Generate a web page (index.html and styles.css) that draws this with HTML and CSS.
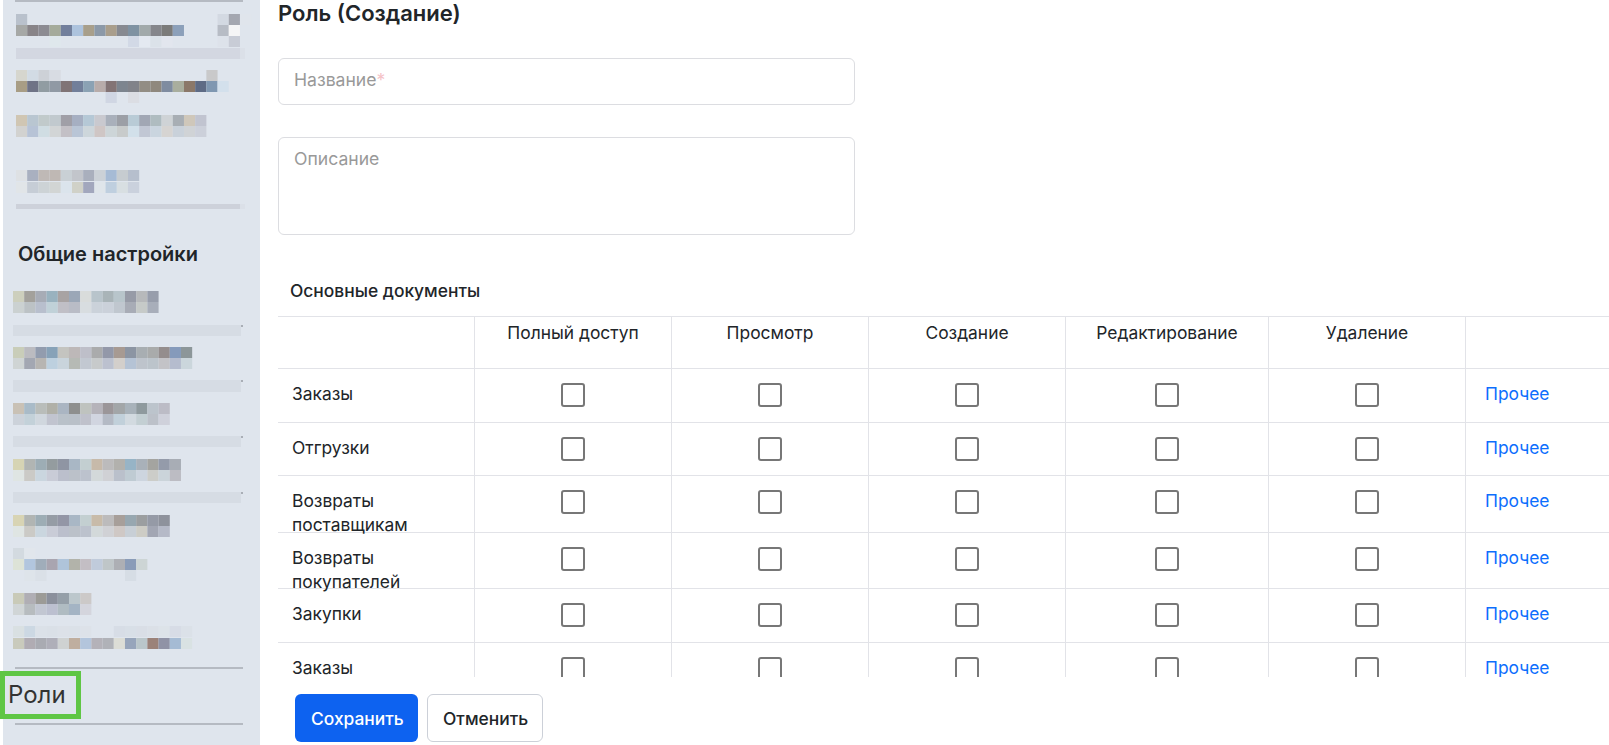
FILE: index.html
```html
<!DOCTYPE html>
<html lang="ru">
<head>
    <meta charset="UTF-8">
    <title>Роль (Создание)</title>
    <link rel="stylesheet" href="styles.css">
</head>
<body>

    <aside class="sidebar">
        <div class="rule"></div>

        <!-- blurred menu items -->
        <svg class="mosaic inset-wide gap-12" width="231" height="33">
            <g>
                <rect x="0" y="0" fill="#b9c1cc"/><rect x="198" y="0" fill="#d3d9e2"/><rect x="209" y="0" fill="#a4a7b0"/><rect x="220" y="0" fill="#e0e5ec"/>
                <rect x="0" y="11" fill="#a6a8a6"/><rect x="11" y="11" fill="#888488"/><rect x="22" y="11" fill="#8c8b92"/><rect x="33" y="11" fill="#a5ab9b"/><rect x="44" y="11" fill="#727f9c"/><rect x="55" y="11" fill="#adc3dd"/><rect x="66" y="11" fill="#a89f8b"/><rect x="77" y="11" fill="#8c99a8"/><rect x="88" y="11" fill="#a99e8c"/><rect x="99" y="11" fill="#878a91"/><rect x="110" y="11" fill="#7f92a2"/><rect x="121" y="11" fill="#a2aaab"/><rect x="132" y="11" fill="#85868b"/><rect x="143" y="11" fill="#7b7b7a"/><rect x="154" y="11" fill="#8ca0ba"/><rect x="198" y="11" fill="#b7bcc5"/><rect x="209" y="11" fill="#f5f5f6"/>
                <rect x="33" y="22" fill="#dfe8ec"/><rect x="110" y="22" fill="#d2d9e6"/><rect x="121" y="22" fill="#e4e9f1"/><rect x="132" y="22" fill="#dbe2e9"/><rect x="143" y="22" fill="#e2e6ee"/><rect x="198" y="22" fill="#dde2ea"/><rect x="209" y="22" fill="#c8ccd6"/>
            </g>
        </svg>
        <div class="strip strip-wide strip-tall gap-1"></div>

        <svg class="mosaic inset-wide gap-11" width="231" height="33">
            <g>
                <rect x="0" y="0" fill="#d6d6ce"/><rect x="11" y="0" fill="#d2dbe4"/><rect x="22" y="0" fill="#cdd1d7"/><rect x="33" y="0" fill="#d8dce3"/><rect x="187" y="0" fill="#c9c9ca"/>
                <rect x="0" y="11" fill="#a89d85"/><rect x="11" y="11" fill="#6f7386"/><rect x="22" y="11" fill="#919ca2"/><rect x="33" y="11" fill="#9099a4"/><rect x="44" y="11" fill="#807476"/><rect x="55" y="11" fill="#727f9a"/><rect x="66" y="11" fill="#8ba2b4"/><rect x="77" y="11" fill="#b8acaa"/><rect x="88" y="11" fill="#837475"/><rect x="99" y="11" fill="#7d858f"/><rect x="110" y="11" fill="#81838a"/><rect x="121" y="11" fill="#928d84"/><rect x="132" y="11" fill="#8f887e"/><rect x="143" y="11" fill="#7f8ca0"/><rect x="154" y="11" fill="#a9ae9e"/><rect x="165" y="11" fill="#8b7869"/><rect x="176" y="11" fill="#5e6b85"/><rect x="187" y="11" fill="#7f97b1"/><rect x="198" y="11" fill="#d3e0ec"/>
                <rect x="88" y="22" fill="#d0d6e3"/><rect x="110" y="22" fill="#dbdde3"/>
            </g>
        </svg>

        <svg class="mosaic inset-wide gap-12" width="187" height="22">
            <g>
                <rect x="0" y="0" fill="#d0c6b3"/><rect x="11" y="0" fill="#b9c6d1"/><rect x="22" y="0" fill="#c1cacb"/><rect x="33" y="0" fill="#c1c9ce"/><rect x="44" y="0" fill="#a09fa7"/><rect x="55" y="0" fill="#a6afc2"/><rect x="66" y="0" fill="#b5c8d6"/><rect x="77" y="0" fill="#c9c9cf"/><rect x="88" y="0" fill="#a9b0bb"/><rect x="99" y="0" fill="#9c9fa6"/><rect x="110" y="0" fill="#b9cbd6"/><rect x="121" y="0" fill="#a1a7b4"/><rect x="132" y="0" fill="#afbcc0"/><rect x="143" y="0" fill="#cfd3d6"/><rect x="154" y="0" fill="#a8aeb4"/><rect x="165" y="0" fill="#cfc7ba"/><rect x="176" y="0" fill="#c1c4d0"/>
                <rect x="0" y="11" fill="#d2d2d0"/><rect x="11" y="11" fill="#b7c3d6"/><rect x="22" y="11" fill="#d0dde3"/><rect x="33" y="11" fill="#d2d5d6"/><rect x="44" y="11" fill="#c3c0c6"/><rect x="55" y="11" fill="#b9c5d6"/><rect x="66" y="11" fill="#cdd6db"/><rect x="77" y="11" fill="#cfc6c5"/><rect x="88" y="11" fill="#cdd5d8"/><rect x="99" y="11" fill="#c8cbcb"/><rect x="110" y="11" fill="#d2e0ea"/><rect x="121" y="11" fill="#c1c7d4"/><rect x="132" y="11" fill="#cad5df"/><rect x="143" y="11" fill="#d6d4d2"/><rect x="154" y="11" fill="#c9d1da"/><rect x="165" y="11" fill="#d0d3d6"/><rect x="176" y="11" fill="#ccd0da"/>
            </g>
        </svg>

        <svg class="mosaic inset-wide gap-33" width="121" height="23">
            <g>
                <rect x="0" y="0" fill="#dee1e4"/><rect x="11" y="0" fill="#a9b0c0"/><rect x="22" y="0" fill="#bfb9b6"/><rect x="33" y="0" fill="#bfb8b4"/><rect x="44" y="0" fill="#c9d0d5"/><rect x="55" y="0" fill="#c2c5cb"/><rect x="66" y="0" fill="#a9afbd"/><rect x="77" y="0" fill="#cbd1d7"/><rect x="88" y="0" fill="#a6bbd5"/><rect x="99" y="0" fill="#c6ccd0"/><rect x="110" y="0" fill="#b6bfcd"/>
                <rect x="0" y="12" fill="#e1e5e8"/><rect x="11" y="12" fill="#c6cdd6"/><rect x="22" y="12" fill="#cdd3d6"/><rect x="33" y="12" fill="#d2d5d4"/><rect x="44" y="12" fill="#dbe4ec"/><rect x="55" y="12" fill="#d0d1c8"/><rect x="66" y="12" fill="#a2a7bd"/><rect x="77" y="12" fill="#dfe5ea"/><rect x="88" y="12" fill="#bfcfdf"/><rect x="99" y="12" fill="#d8dfe2"/><rect x="110" y="12" fill="#cad1dd"/>
            </g>
        </svg>
        <div class="strip strip-wide strip-thin gap-11"></div>

        <h2 class="sidebar-title">Общие настройки</h2>

        <svg class="mosaic inset-list gap-25" width="143" height="22">
            <g>
                <rect x="0" y="0" fill="#cdcfbd"/><rect x="11" y="0" fill="#a3a19c"/><rect x="22" y="0" fill="#a7acb6"/><rect x="33" y="0" fill="#99b2bf"/><rect x="44" y="0" fill="#a8a3a3"/><rect x="55" y="0" fill="#9ba7b7"/><rect x="66" y="0" fill="#d9dcdb"/><rect x="77" y="0" fill="#b8c4cb"/><rect x="88" y="0" fill="#a9b4b8"/><rect x="99" y="0" fill="#b8c5cb"/><rect x="110" y="0" fill="#979ba7"/><rect x="121" y="0" fill="#b7b9bb"/><rect x="132" y="0" fill="#979dab"/>
                <rect x="0" y="11" fill="#cbd1d1"/><rect x="11" y="11" fill="#bcc2c5"/><rect x="22" y="11" fill="#b8bfcd"/><rect x="33" y="11" fill="#c0d1d8"/><rect x="44" y="11" fill="#c0bfc6"/><rect x="55" y="11" fill="#b9bcc6"/><rect x="66" y="11" fill="#d8dde0"/><rect x="77" y="11" fill="#cbd2da"/><rect x="88" y="11" fill="#cbd1da"/><rect x="99" y="11" fill="#c0c7cf"/><rect x="110" y="11" fill="#a8acb6"/><rect x="121" y="11" fill="#c6cac8"/><rect x="132" y="11" fill="#a8aeba"/>
            </g>
        </svg>
        <div class="strip strip-list strip-tall gap-12"></div>

        <svg class="mosaic inset-list gap-11" width="176" height="22">
            <g>
                <rect x="0" y="0" fill="#c9cdb9"/><rect x="11" y="0" fill="#bbbbc0"/><rect x="22" y="0" fill="#929cae"/><rect x="33" y="0" fill="#87a2b8"/><rect x="44" y="0" fill="#c4c4c0"/><rect x="55" y="0" fill="#bdb8b8"/><rect x="66" y="0" fill="#bebfc9"/><rect x="77" y="0" fill="#aaabac"/><rect x="88" y="0" fill="#9398a9"/><rect x="99" y="0" fill="#a79a92"/><rect x="110" y="0" fill="#8c95a3"/><rect x="121" y="0" fill="#a8aeb2"/><rect x="132" y="0" fill="#a9abab"/><rect x="143" y="0" fill="#948d8d"/><rect x="154" y="0" fill="#859abb"/><rect x="165" y="0" fill="#8c9699"/>
                <rect x="0" y="11" fill="#cfd4d4"/><rect x="11" y="11" fill="#a3a7b2"/><rect x="22" y="11" fill="#b7b5b2"/><rect x="33" y="11" fill="#bdd0df"/><rect x="44" y="11" fill="#c9d4dc"/><rect x="55" y="11" fill="#b6bab5"/><rect x="66" y="11" fill="#c2c8d1"/><rect x="77" y="11" fill="#c7cacb"/><rect x="88" y="11" fill="#bcc1cf"/><rect x="99" y="11" fill="#d3cfcb"/><rect x="110" y="11" fill="#b5c3d5"/><rect x="121" y="11" fill="#bec4cc"/><rect x="132" y="11" fill="#bcc4cb"/><rect x="143" y="11" fill="#c3c3c7"/><rect x="154" y="11" fill="#b5bcce"/><rect x="165" y="11" fill="#cbd6dc"/>
            </g>
        </svg>
        <div class="strip strip-list strip-taller gap-11"></div>

        <svg class="mosaic inset-list gap-11" width="154" height="22">
            <g>
                <rect x="0" y="0" fill="#c9c1b5"/><rect x="11" y="0" fill="#a9bbc8"/><rect x="22" y="0" fill="#b9bdba"/><rect x="33" y="0" fill="#b0b0a8"/><rect x="44" y="0" fill="#aab5c2"/><rect x="55" y="0" fill="#8e8f8e"/><rect x="66" y="0" fill="#bfc3bf"/><rect x="77" y="0" fill="#b5b3ba"/><rect x="88" y="0" fill="#9b9699"/><rect x="99" y="0" fill="#a2a6a8"/><rect x="110" y="0" fill="#a8b2ba"/><rect x="121" y="0" fill="#8f9a9e"/><rect x="132" y="0" fill="#bcc4cc"/><rect x="143" y="0" fill="#bcbcc6"/>
                <rect x="0" y="11" fill="#ccd2da"/><rect x="11" y="11" fill="#c3d1d9"/><rect x="22" y="11" fill="#d0d7de"/><rect x="33" y="11" fill="#c1c4cf"/><rect x="44" y="11" fill="#b9c1c9"/><rect x="55" y="11" fill="#b9c0c8"/><rect x="66" y="11" fill="#bfc1cb"/><rect x="77" y="11" fill="#d1d5e0"/><rect x="88" y="11" fill="#b4bac5"/><rect x="99" y="11" fill="#c1d0da"/><rect x="110" y="11" fill="#d2dae0"/><rect x="121" y="11" fill="#c3cfd3"/><rect x="132" y="11" fill="#bcc1c9"/><rect x="143" y="11" fill="#cfd1db"/>
            </g>
        </svg>
        <div class="strip strip-list strip-tall gap-11"></div>

        <svg class="mosaic inset-list gap-12" width="165" height="22">
            <g>
                <rect x="0" y="0" fill="#d6d4b4"/><rect x="11" y="0" fill="#b1b5b3"/><rect x="22" y="0" fill="#9dadb5"/><rect x="33" y="0" fill="#949c9f"/><rect x="44" y="0" fill="#8f95a3"/><rect x="55" y="0" fill="#a9b7c5"/><rect x="66" y="0" fill="#c3cfd1"/><rect x="77" y="0" fill="#c7baaa"/><rect x="88" y="0" fill="#bcbbbc"/><rect x="99" y="0" fill="#b2b1ad"/><rect x="110" y="0" fill="#97b4c6"/><rect x="121" y="0" fill="#a9b1b9"/><rect x="132" y="0" fill="#a4a4a0"/><rect x="143" y="0" fill="#949baa"/><rect x="154" y="0" fill="#a8adb5"/>
                <rect x="0" y="11" fill="#dfe5e3"/><rect x="11" y="11" fill="#cbcac6"/><rect x="22" y="11" fill="#cad6df"/><rect x="33" y="11" fill="#c9ccd7"/><rect x="44" y="11" fill="#bbbfcc"/><rect x="55" y="11" fill="#bbc1c9"/><rect x="66" y="11" fill="#bcc2cd"/><rect x="77" y="11" fill="#d3d9da"/><rect x="88" y="11" fill="#d0d1d5"/><rect x="99" y="11" fill="#bac0cb"/><rect x="110" y="11" fill="#bfcbd3"/><rect x="121" y="11" fill="#cdd5df"/><rect x="132" y="11" fill="#cccdc9"/><rect x="143" y="11" fill="#cbd4da"/><rect x="154" y="11" fill="#bcbcc3"/>
            </g>
        </svg>
        <div class="strip strip-list strip-tall gap-11"></div>

        <svg class="mosaic inset-list gap-12" width="154" height="22">
            <g>
                <rect x="0" y="0" fill="#d8d4b4"/><rect x="11" y="0" fill="#b1b5b3"/><rect x="22" y="0" fill="#9dadb5"/><rect x="33" y="0" fill="#959ca5"/><rect x="44" y="0" fill="#9396a6"/><rect x="55" y="0" fill="#a9b7c5"/><rect x="66" y="0" fill="#c3cfd1"/><rect x="77" y="0" fill="#c8bba9"/><rect x="88" y="0" fill="#bcbbbc"/><rect x="99" y="0" fill="#a79f9a"/><rect x="110" y="0" fill="#97a7b0"/><rect x="121" y="0" fill="#9b9ea0"/><rect x="132" y="0" fill="#959aa6"/><rect x="143" y="0" fill="#8e929c"/>
                <rect x="0" y="11" fill="#dfe5e3"/><rect x="11" y="11" fill="#cbcac6"/><rect x="22" y="11" fill="#cad6df"/><rect x="33" y="11" fill="#c9ccd7"/><rect x="44" y="11" fill="#bbbfcc"/><rect x="55" y="11" fill="#bbc1c9"/><rect x="66" y="11" fill="#bcc2cd"/><rect x="77" y="11" fill="#d3d9da"/><rect x="88" y="11" fill="#d0d1d5"/><rect x="99" y="11" fill="#cfc8c5"/><rect x="110" y="11" fill="#c8cfd6"/><rect x="121" y="11" fill="#cdccc5"/><rect x="132" y="11" fill="#a2a6b3"/><rect x="143" y="11" fill="#b5b9c7"/>
            </g>
        </svg>

        <svg class="mosaic inset-list gap-11" width="132" height="33">
            <g>
                <rect x="0" y="0" fill="#d3dae0"/><rect x="11" y="0" fill="#e1e6ec"/>
                <rect x="0" y="11" fill="#dde3d7"/><rect x="11" y="11" fill="#b2c6de"/><rect x="22" y="11" fill="#a0adba"/><rect x="33" y="11" fill="#a9a5b0"/><rect x="44" y="11" fill="#afc4da"/><rect x="55" y="11" fill="#b2b3aa"/><rect x="66" y="11" fill="#c3bec4"/><rect x="77" y="11" fill="#c0cbdb"/><rect x="88" y="11" fill="#bfc6c8"/><rect x="99" y="11" fill="#adafb4"/><rect x="110" y="11" fill="#8a9cb8"/><rect x="121" y="11" fill="#cdd5d5"/>
                <rect x="11" y="22" fill="#dee4ea"/><rect x="22" y="22" fill="#dae0e7"/><rect x="110" y="22" fill="#d6dde5"/>
            </g>
        </svg>

        <svg class="mosaic inset-list gap-12" width="77" height="22">
            <g>
                <rect x="0" y="0" fill="#c9cab8"/><rect x="11" y="0" fill="#b0aeb4"/><rect x="22" y="0" fill="#9c9b97"/><rect x="33" y="0" fill="#8b909c"/><rect x="44" y="0" fill="#959fa8"/><rect x="55" y="0" fill="#bcc7cc"/><rect x="66" y="0" fill="#ccc9c8"/>
                <rect x="0" y="11" fill="#d0d5d6"/><rect x="11" y="11" fill="#b7bcbf"/><rect x="22" y="11" fill="#c2c7d2"/><rect x="33" y="11" fill="#bcc0d0"/><rect x="44" y="11" fill="#b0bcc2"/><rect x="55" y="11" fill="#a4b4c4"/><rect x="66" y="11" fill="#d4d5dd"/>
            </g>
        </svg>

        <svg class="mosaic inset-list gap-11" width="176" height="23">
            <g>
                <rect x="0" y="0" fill="#d9e0e2"/><rect x="11" y="0" fill="#ccd8e3"/><rect x="22" y="0" fill="#dbe1e8"/><rect x="33" y="0" fill="#dae0e7"/><rect x="44" y="0" fill="#dce1e8"/><rect x="55" y="0" fill="#dbe1e8"/><rect x="66" y="0" fill="#dde2e9"/><rect x="99" y="0" fill="#d7dde6"/><rect x="110" y="0" fill="#d8dfe7"/><rect x="121" y="0" fill="#d9dee6"/><rect x="132" y="0" fill="#dbe0e7"/><rect x="143" y="0" fill="#dde3e9"/><rect x="154" y="0" fill="#d7dce6"/><rect x="165" y="0" fill="#dbe1e8"/>
                <rect x="0" y="12" fill="#c9cabc"/><rect x="11" y="12" fill="#b0acb3"/><rect x="22" y="12" fill="#a9abb2"/><rect x="33" y="12" fill="#afafb9"/><rect x="44" y="12" fill="#cfd2d2"/><rect x="55" y="12" fill="#bfae9f"/><rect x="66" y="12" fill="#b3c5dc"/><rect x="77" y="12" fill="#b4b2b9"/><rect x="88" y="12" fill="#b0b2b8"/><rect x="99" y="12" fill="#dcddd6"/><rect x="110" y="12" fill="#97a5bb"/><rect x="121" y="12" fill="#bac6ca"/><rect x="132" y="12" fill="#9b8279"/><rect x="143" y="12" fill="#9093a6"/><rect x="154" y="12" fill="#a5bbd4"/><rect x="165" y="12" fill="#d9e2e3"/>
            </g>
        </svg>

        <div class="rule gap-18"></div>
        <div class="role-item">Роли</div>
        <div class="rule gap-4"></div>
    </aside>

    <main class="content">
        <h1 class="page-title">Роль (Создание)</h1>

        <div class="field field-name">
            <input type="text" class="field-input" id="role-name">
            <label class="field-label" for="role-name">Название<span class="required">*</span></label>
        </div>

        <div class="field field-description">
            <textarea class="field-input" id="role-description"></textarea>
            <label class="field-label" for="role-description">Описание</label>
        </div>

        <h3 class="section-title">Основные документы</h3>

        <div class="rights-table">
            <div class="rights-row row-head">
                <div class="cell"></div>
                <div class="cell cell-center">Полный доступ</div>
                <div class="cell cell-center">Просмотр</div>
                <div class="cell cell-center">Создание</div>
                <div class="cell cell-center">Редактирование</div>
                <div class="cell cell-center">Удаление</div>
                <div class="cell"></div>
            </div>

            <div class="rights-row row-54">
                <div class="cell cell-name">Заказы</div>
                <div class="cell cell-center"><input type="checkbox" class="check"></div>
                <div class="cell cell-center"><input type="checkbox" class="check"></div>
                <div class="cell cell-center"><input type="checkbox" class="check"></div>
                <div class="cell cell-center"><input type="checkbox" class="check"></div>
                <div class="cell cell-center"><input type="checkbox" class="check"></div>
                <div class="cell cell-link"><a href="#" class="more-link">Прочее</a></div>
            </div>

            <div class="rights-row row-53">
                <div class="cell cell-name">Отгрузки</div>
                <div class="cell cell-center"><input type="checkbox" class="check"></div>
                <div class="cell cell-center"><input type="checkbox" class="check"></div>
                <div class="cell cell-center"><input type="checkbox" class="check"></div>
                <div class="cell cell-center"><input type="checkbox" class="check"></div>
                <div class="cell cell-center"><input type="checkbox" class="check"></div>
                <div class="cell cell-link"><a href="#" class="more-link">Прочее</a></div>
            </div>

            <div class="rights-row row-57">
                <div class="cell cell-name">Возвраты поставщикам</div>
                <div class="cell cell-center"><input type="checkbox" class="check"></div>
                <div class="cell cell-center"><input type="checkbox" class="check"></div>
                <div class="cell cell-center"><input type="checkbox" class="check"></div>
                <div class="cell cell-center"><input type="checkbox" class="check"></div>
                <div class="cell cell-center"><input type="checkbox" class="check"></div>
                <div class="cell cell-link"><a href="#" class="more-link">Прочее</a></div>
            </div>

            <div class="rights-row row-56">
                <div class="cell cell-name">Возвраты покупателей</div>
                <div class="cell cell-center"><input type="checkbox" class="check"></div>
                <div class="cell cell-center"><input type="checkbox" class="check"></div>
                <div class="cell cell-center"><input type="checkbox" class="check"></div>
                <div class="cell cell-center"><input type="checkbox" class="check"></div>
                <div class="cell cell-center"><input type="checkbox" class="check"></div>
                <div class="cell cell-link"><a href="#" class="more-link">Прочее</a></div>
            </div>

            <div class="rights-row row-54">
                <div class="cell cell-name">Закупки</div>
                <div class="cell cell-center"><input type="checkbox" class="check"></div>
                <div class="cell cell-center"><input type="checkbox" class="check"></div>
                <div class="cell cell-center"><input type="checkbox" class="check"></div>
                <div class="cell cell-center"><input type="checkbox" class="check"></div>
                <div class="cell cell-center"><input type="checkbox" class="check"></div>
                <div class="cell cell-link"><a href="#" class="more-link">Прочее</a></div>
            </div>

            <div class="rights-row row-54">
                <div class="cell cell-name">Заказы</div>
                <div class="cell cell-center"><input type="checkbox" class="check"></div>
                <div class="cell cell-center"><input type="checkbox" class="check"></div>
                <div class="cell cell-center"><input type="checkbox" class="check"></div>
                <div class="cell cell-center"><input type="checkbox" class="check"></div>
                <div class="cell cell-center"><input type="checkbox" class="check"></div>
                <div class="cell cell-link"><a href="#" class="more-link">Прочее</a></div>
            </div>
        </div>

        <div class="form-actions">
            <button type="button" class="btn btn-primary">Сохранить</button>
            <button type="button" class="btn btn-outline">Отменить</button>
        </div>
    </main>

</body>
</html>
```

FILE: styles.css
```css
:root {
    --sidebar-bg: #dfe5ed;
    --rule-color: #b5bac2;
    --line-color: #e2e3e8;
    --text-color: #212529;
    --muted-color: #999999;
    --primary-color: #0d62f0;
    --link-color: #0d6efd;
}

* {
    box-sizing: border-box;
}

body {
    display: flex;
    height: 745px;
    margin: 0;
    padding-left: 3px;
    overflow: hidden;
    background-color: #ffffff;
    color: var(--text-color);
    font-family: Inter, 'Noto Sans', sans-serif;
    font-size: 17.4px;
    line-height: 24px;
}

/* --- Sidebar --- */
.sidebar {
    flex: 0 0 257px;
    background-color: var(--sidebar-bg);
}

.rule {
    width: 228px;
    height: 2px;
    margin-left: 12px;
    background-color: var(--rule-color);
}

.mosaic {
    display: block;
    overflow: visible;
}
/* source cells are a touch wider than 11px */
.mosaic g {
    transform: scaleX(1.018);
}
.mosaic rect {
    width: 11px;
    height: 11px;
}
.inset-wide { margin-left: 13px; }
.inset-list { margin-left: 10px; }

.strip {
    position: relative;
}
.strip-wide {
    width: 224px;
    margin-left: 13px;
    background-color: #d3d7e1;
    box-shadow: 5px 0 0 #dbe0e8;
}
.strip-list {
    width: 228px;
    margin-left: 10px;
    background-color: #d6dce4;
}
/* the tiny dark speck at the end of a blurred row */
.strip-list::after {
    content: '';
    position: absolute;
    top: 0;
    right: -2px;
    width: 2px;
    height: 2px;
    background-color: #a9aeb6;
}
.strip-thin { height: 5px; background-color: #cdd1da; }
.strip-tall { height: 11px; }
.strip-taller { height: 12px; }

.gap-1 { margin-top: 1px; }
.gap-4 { margin-top: 4px; }
.gap-11 { margin-top: 11px; }
.gap-12 { margin-top: 12px; }
.gap-18 { margin-top: 18px; }
.gap-25 { margin-top: 25px; }
.gap-33 { margin-top: 33px; }

.sidebar-title {
    margin: 33px 0 0 15px;
    font-size: 20px;
    font-weight: 600;
    line-height: 24px;
}

.role-item {
    width: 81px;
    height: 48px;
    margin: 2px 0 0 -3px;
    padding-left: 3px;
    border: 5px solid #5fc645;
    color: #333333;
    font-size: 24px;
    line-height: 38px;
}

/* --- Form --- */
.content {
    display: flex;
    flex: 1;
    flex-direction: column;
    min-width: 0;
    padding-left: 18px;
}

.page-title {
    height: 26px;
    margin: 0;
    font-size: 22px;
    font-weight: 600;
    line-height: 26px;
}

.field {
    position: relative;
    width: 577px;
}
.field-name {
    height: 47px;
    margin-top: 32px;
}
.field-description {
    height: 98px;
    margin-top: 32px;
}

.field-input {
    display: block;
    width: 100%;
    height: 100%;
    border: 1px solid #dcdde1;
    border-radius: 6px;
    outline: none;
    resize: none;
}

.field-label {
    position: absolute;
    top: 10px;
    left: 16px;
    color: var(--muted-color);
    font-size: 17.6px;
}

.required {
    color: #f5c2c7;
}

.section-title {
    height: 24px;
    margin: 44px 0 13px;
    padding-left: 12px;
    font-size: 17.4px;
    font-weight: 500;
    line-height: 24px;
}

/* --- Rights table --- */
.rights-table {
    flex: 0 0 361px;
    overflow: hidden;
}

.rights-row {
    display: grid;
    grid-template-columns: 196px 197px 197px 197px 203px 197px 1fr;
    border-top: 1px solid var(--line-color);
}
.row-head { height: 52px; }
.row-53 { height: 53px; }
.row-54 { height: 54px; }
.row-56 { height: 56px; }
.row-57 { height: 57px; }

.cell {
    padding-top: 4px;
    border-left: 1px solid var(--line-color);
}
.cell:first-child {
    border-left: none;
}
.cell-center {
    text-align: center;
}
.rights-row:not(.row-head) .cell {
    padding-top: 13px;
}
.rights-row:not(.row-head) .cell-name {
    padding-left: 14px;
    padding-right: 40px;
}
.rights-row:not(.row-head) .cell-link {
    padding-left: 19px;
}

.check {
    appearance: none;
    display: block;
    width: 24px;
    height: 24px;
    margin: 1px auto 0;
    border: 2px solid #777777;
    border-radius: 3px;
    background-color: #ffffff;
}

.more-link {
    color: var(--link-color);
    text-decoration: none;
}

/* --- Buttons --- */
.form-actions {
    display: flex;
    gap: 9px;
    padding: 17px 0 0 17px;
}

.btn {
    height: 48px;
    padding: 0 15px;
    border: 1px solid transparent;
    border-radius: 6px;
    font-family: inherit;
    font-size: 17.4px;
    font-weight: 500;
}
.btn-primary {
    width: 123px;
    background-color: var(--primary-color);
    color: #ffffff;
}
.btn-outline {
    width: 116px;
    border-color: #ccd0d8;
    background-color: #ffffff;
    color: var(--text-color);
}
```
